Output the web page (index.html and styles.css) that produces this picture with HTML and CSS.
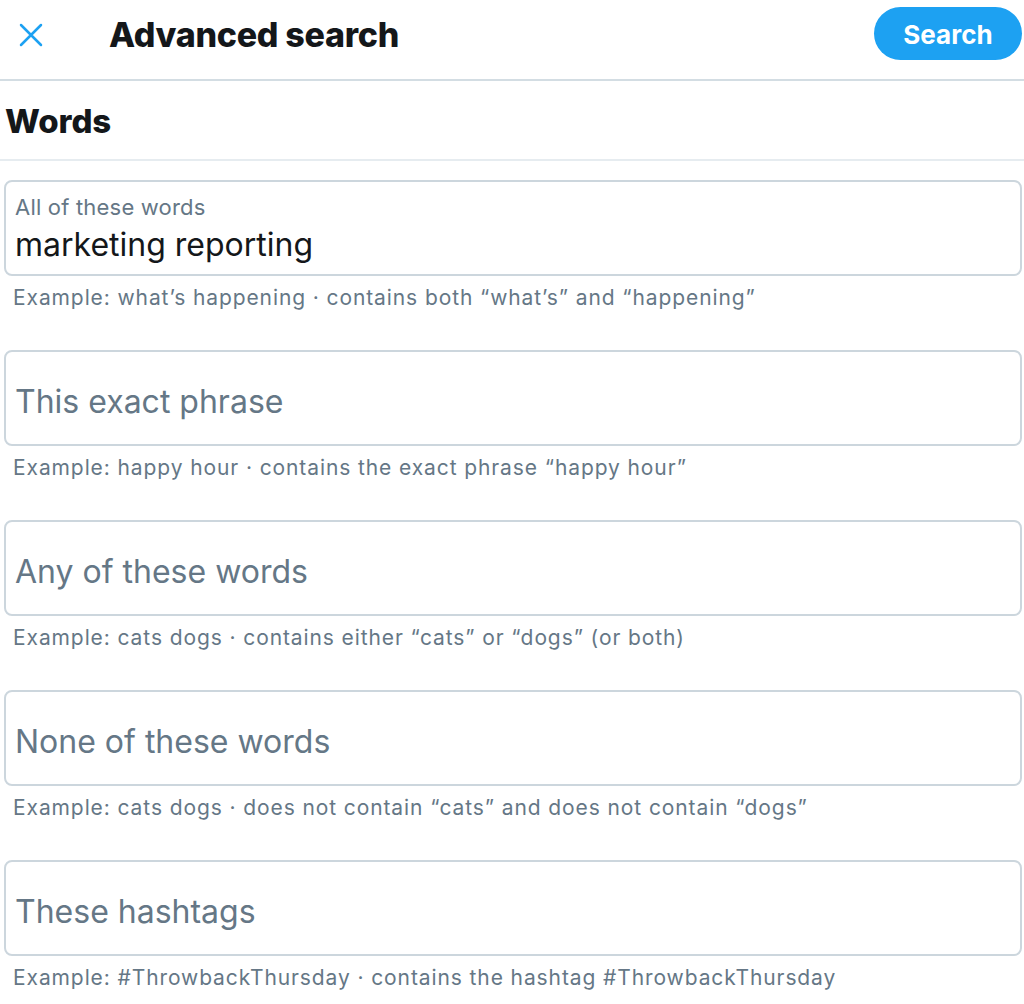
FILE: index.html
```html
<!DOCTYPE html>
<html lang="en">
  <head>
    <meta charset="UTF-8" />
    <meta name="viewport" content="width=device-width, initial-scale=1.0" />
    <title>Advanced search</title>
    <link rel="stylesheet" href="styles.css">
  </head>
  <body>
    <header class="top-bar">
      <button class="close-btn" aria-label="Close">
        <svg viewBox="0 0 24 24" width="30" height="30">
          <path d="M4 4 L20 20 M20 4 L4 20" stroke="#1da1f2" stroke-width="2" stroke-linecap="round" fill="none" />
        </svg>
      </button>
      <h1 class="title">Advanced search</h1>
      <button class="search-btn">Search</button>
    </header>

    <h2 class="section-title">Words</h2>

    <form class="fields">
      <div class="field">
        <label class="box filled">
          <span class="box-label">All of these words</span>
          <span class="box-value">marketing reporting</span>
        </label>
        <p class="hint">Example: what’s happening · contains both “what’s” and “happening”</p>
      </div>

      <div class="field">
        <label class="box">
          <span class="placeholder">This exact phrase</span>
        </label>
        <p class="hint">Example: happy hour · contains the exact phrase “happy hour”</p>
      </div>

      <div class="field">
        <label class="box">
          <span class="placeholder">Any of these words</span>
        </label>
        <p class="hint">Example: cats dogs · contains either “cats” or “dogs” (or both)</p>
      </div>

      <div class="field">
        <label class="box">
          <span class="placeholder">None of these words</span>
        </label>
        <p class="hint">Example: cats dogs · does not contain “cats” and does not contain “dogs”</p>
      </div>

      <div class="field">
        <label class="box">
          <span class="placeholder">These hashtags</span>
        </label>
        <p class="hint">Example: #ThrowbackThursday · contains the hashtag #ThrowbackThursday</p>
      </div>
    </form>
  </body>
</html>
```

FILE: styles.css
```css
* {
  margin: 0;
  padding: 0;
  box-sizing: border-box;
}

body {
  font-family: Inter, "Noto Sans", sans-serif;
  background: #fff;
  color: #14171a;
  overflow: hidden;
}

.top-bar {
  height: 81px;
  display: flex;
  align-items: center;
  border-bottom: 2px solid #d3dde3;
  padding: 0 2px 0 16px;
}

.close-btn {
  background: none;
  border: none;
  width: 30px;
  height: 30px;
  display: flex;
  margin-top: -10px;
}

.title {
  font-size: 34px;
  font-weight: 800;
  letter-spacing: -0.3px;
  margin-left: 63px;
  margin-top: -10px;
  flex: 1;
}

.search-btn {
  background: #1da1f2;
  color: #fff;
  border: none;
  border-radius: 27px;
  width: 148px;
  height: 53px;
  font-family: inherit;
  font-size: 26px;
  font-weight: 700;
  padding-top: 2px;
  margin-top: -12px;
}

.section-title {
  font-size: 33px;
  font-weight: 800;
  letter-spacing: -0.1px;
  padding: 20px 5px 0;
  height: 80px;
  border-bottom: 2px solid #e6ecf0;
}

.fields {
  padding: 19px 2px 0 4px;
}

.field {
  height: 170px;
}

.box {
  display: flex;
  flex-direction: column;
  justify-content: center;
  height: 96px;
  border: 2px solid #ccd6dd;
  border-radius: 8px;
  padding: 0 9px;
}

.box.filled {
  justify-content: flex-start;
  padding-top: 12px;
}

.box-label {
  font-size: 22px;
  line-height: 26px;
  letter-spacing: 0.2px;
  color: #657786;
}

.box-value {
  font-size: 32px;
  line-height: 38px;
  color: #14171a;
  margin-top: 6px;
}

.placeholder {
  font-size: 32px;
  color: #657786;
  margin-top: 6px;
}

.hint {
  font-size: 21px;
  letter-spacing: 0.9px;
  color: #657786;
  margin: 9px 0 0 9px;
}
```
